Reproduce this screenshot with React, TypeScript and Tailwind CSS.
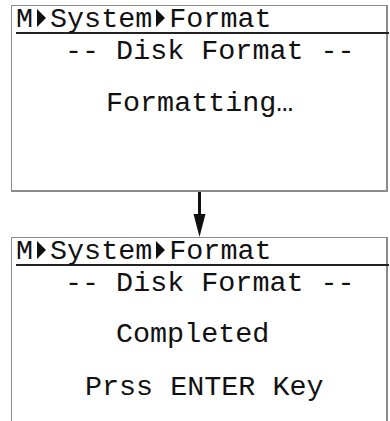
const lcd = { fontFamily: '"Liberation Mono", "DejaVu Sans Mono", monospace' };

function Tri() {
  return (
    <svg className="inline-block align-baseline" width="17" height="18" viewBox="0 0 17 18">
      <polygon points="4,0 13,9 4,18" fill="#111" />
    </svg>
  );
}

function Header() {
  return (
    <div className="ml-[4px] -mr-[3px] pt-[2px] h-[28px] leading-[24px] border-b-2 border-[#222] whitespace-pre">
      M<Tri />System<Tri />Format
    </div>
  );
}

function Screen({ lines }: { lines: { text: string; pl: string; mt: string }[] }) {
  return (
    <div className="ml-[11px] w-[377px] h-[200px] border-t border-l border-r-2 border-[#8c8c8c] text-[28.4px] text-[#111]" style={lcd}>
      <Header />
      {lines.map((l) => (
        <div key={l.text} className={`${l.pl} ${l.mt} leading-[32px] whitespace-pre`}>
          {l.text}
        </div>
      ))}
    </div>
  );
}

export default function App() {
  return (
    <div className="w-[390px] h-[421px] bg-white overflow-hidden pt-[5px]">
      <div className="h-[187px] ml-[11px] w-[377px] border border-r-2 border-b-2 border-[#8c8c8c] text-[28.4px] text-[#111]" style={lcd}>
        <Header />
        <div className="pl-[53px] mt-[2px] leading-[32px] whitespace-pre">-- Disk Format --</div>
        <div className="pl-[94px] mt-[20px] leading-[32px] whitespace-pre">Formatting…</div>
      </div>
      <div className="ml-[11px] w-[377px] flex justify-center h-[45px]">
        <svg width="17" height="45" viewBox="0 0 17 45">
          <rect x="7" y="0" width="3" height="26" fill="#111" />
          <polygon points="2.5,22 14.5,22 8.5,45" fill="#111" />
        </svg>
      </div>
      <Screen
        lines={[
          { text: "-- Disk Format --", pl: "pl-[53px]", mt: "mt-[2px]" },
          { text: "Completed", pl: "pl-[104px]", mt: "mt-[19px]" },
          { text: "Prss ENTER Key", pl: "pl-[73px]", mt: "mt-[21px]" },
        ]}
      />
    </div>
  );
}
